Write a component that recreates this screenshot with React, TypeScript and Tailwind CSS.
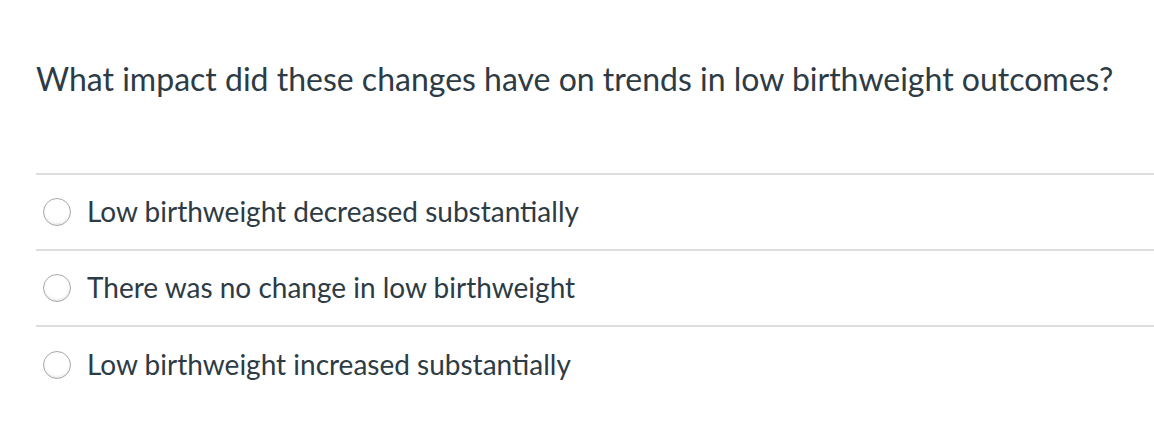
import React from 'react';

const answers = [
  'Low birthweight decreased substantially',
  'There was no change in low birthweight',
  'Low birthweight increased substantially',
];

export default function App() {
  return (
    <div className="w-[1154px] h-[428px] bg-white text-[#2d3b45] font-['Lato',sans-serif]">
      <div className="pl-[36px] pt-[59px]">
        <h1 className="text-[32px] leading-[40px] font-normal">
          What impact did these changes have on trends in low birthweight outcomes?
        </h1>
        <div className="mt-[74px] border-t-2 border-[#dddddd]">
          {answers.map((a, i) => (
            <div
              key={i}
              className={`flex items-center h-[76px] ${i < answers.length - 1 ? 'border-b-2 border-[#dddddd]' : ''}`}
            >
              <span className="ml-[7px] w-[28px] h-[28px] rounded-full border border-[#a8a8a8] bg-white shadow-[inset_0_-2px_2px_rgba(0,0,0,0.08)]" />
              <span className="ml-[16px] text-[28px] leading-[34px] -mt-[2px]">{a}</span>
            </div>
          ))}
        </div>
      </div>
    </div>
  );
}
